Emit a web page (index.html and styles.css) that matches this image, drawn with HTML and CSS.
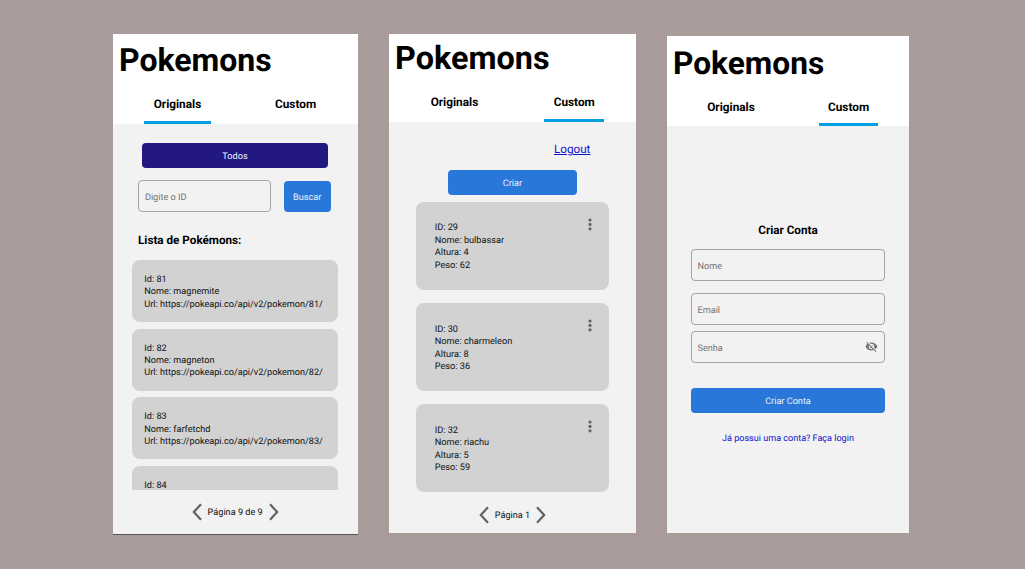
FILE: index.html
```html
<!DOCTYPE html>
<html lang="pt-BR">
<head>
<meta charset="utf-8">
<title>Pokemons</title>
<link rel="stylesheet" href="styles.css">
</head>
<body>
<main class="board">
  <section class="phone phone-list">
    <header class="head">
      <h1 class="title">Pokemons</h1>
      <nav class="tabs"><a class="tab active">Originals</a><a class="tab">Custom</a></nav>
    </header>
    <div class="content">
      <button class="btn btn-all">Todos</button>
      <div class="search">
        <div class="field"><span>Digite o ID</span></div>
        <button class="btn btn-search">Buscar</button>
      </div>
      <h2 class="subtitle">Lista de Pokémons:</h2>
      <div class="list">
        <article class="card"><p>Id: 81</p><p>Nome: magnemite</p><p>Url: https://pokeapi.co/api/v2/pokemon/81/</p></article>
        <article class="card"><p>Id: 82</p><p>Nome: magneton</p><p>Url: https://pokeapi.co/api/v2/pokemon/82/</p></article>
        <article class="card"><p>Id: 83</p><p>Nome: farfetchd</p><p>Url: https://pokeapi.co/api/v2/pokemon/83/</p></article>
        <article class="card"><p>Id: 84</p></article>
      </div>
      <div class="pager">
        <svg class="chev" viewBox="0 0 10 18"><path d="M9 1.3 1.8 9 9 16.7"/></svg>
        <span>Página 9 de 9</span>
        <svg class="chev" viewBox="0 0 10 18"><path d="M1 1.3 8.2 9 1 16.7"/></svg>
      </div>
    </div>
  </section>

  <section class="phone phone-custom">
    <header class="head">
      <h1 class="title">Pokemons</h1>
      <nav class="tabs"><a class="tab">Originals</a><a class="tab active">Custom</a></nav>
    </header>
    <div class="content">
      <a class="logout">Logout</a>
      <button class="btn btn-create">Criar</button>
      <div class="list">
        <article class="card">
          <div><p>ID: 29</p><p>Nome: bulbassar</p><p>Altura: 4</p><p>Peso: 62</p></div>
          <svg class="dots" viewBox="0 0 4 13"><circle cx="2" cy="2" r="1.6"/><circle cx="2" cy="6.4" r="1.6"/><circle cx="2" cy="10.8" r="1.6"/></svg>
        </article>
        <article class="card">
          <div><p>ID: 30</p><p>Nome: charmeleon</p><p>Altura: 8</p><p>Peso: 36</p></div>
          <svg class="dots" viewBox="0 0 4 13"><circle cx="2" cy="2" r="1.6"/><circle cx="2" cy="6.4" r="1.6"/><circle cx="2" cy="10.8" r="1.6"/></svg>
        </article>
        <article class="card">
          <div><p>ID: 32</p><p>Nome: riachu</p><p>Altura: 5</p><p>Peso: 59</p></div>
          <svg class="dots" viewBox="0 0 4 13"><circle cx="2" cy="2" r="1.6"/><circle cx="2" cy="6.4" r="1.6"/><circle cx="2" cy="10.8" r="1.6"/></svg>
        </article>
      </div>
      <div class="pager">
        <svg class="chev" viewBox="0 0 10 18"><path d="M9 1.3 1.8 9 9 16.7"/></svg>
        <span>Página 1</span>
        <svg class="chev" viewBox="0 0 10 18"><path d="M1 1.3 8.2 9 1 16.7"/></svg>
      </div>
    </div>
  </section>

  <section class="phone phone-signup">
    <header class="head">
      <h1 class="title">Pokemons</h1>
      <nav class="tabs"><a class="tab">Originals</a><a class="tab active">Custom</a></nav>
    </header>
    <div class="content">
      <h2 class="subtitle">Criar Conta</h2>
      <div class="field"><span>Nome</span></div>
      <div class="field field-email"><span>Email</span></div>
      <div class="field field-pass"><span>Senha</span>
        <svg class="eye" viewBox="0 0 24 24"><path d="M11.83 9 15 12.16V12a3 3 0 0 0-3-3h-.17m-4.3.8 1.55 1.55c-.05.21-.08.42-.08.65a3 3 0 0 0 3 3c.22 0 .44-.03.65-.08l1.55 1.55c-.67.33-1.41.53-2.2.53a5 5 0 0 1-5-5c0-.79.2-1.53.53-2.2M2 4.27l2.28 2.28.45.45C3.08 8.3 1.78 10 1 12c1.73 4.39 6 7.5 11 7.5 1.55 0 3.03-.3 4.38-.84l.43.42L19.73 22 21 20.73 3.27 3M12 7a5 5 0 0 1 5 5c0 .64-.13 1.26-.36 1.82l2.93 2.93c1.5-1.25 2.7-2.89 3.43-4.75-1.73-4.39-6-7.5-11-7.5-1.4 0-2.74.25-4 .7l2.17 2.15C10.74 7.13 11.35 7 12 7z"/></svg>
      </div>
      <button class="btn btn-signup">Criar Conta</button>
      <a class="login">Já possui uma conta? Faça login</a>
    </div>
  </section>
</main>
</body>
</html>
```
FILE: styles.css
```css
* { box-sizing: border-box; }
body { margin: 0; background: #a99b99; font-family: Roboto, sans-serif; color: #000; text-rendering: geometricPrecision; }
h1, h2, p { margin: 0; }
.board { display: flex; align-items: flex-start; height: 569px; padding-left: 113px; overflow: hidden; }

.phone { display: flex; flex-direction: column; flex: none; background: #f2f2f2; }
.phone-list { width: 244.7px; height: 500.2px; margin-top: 34.4px; border-bottom: 1px solid #555; }
.phone-custom { width: 247px; height: 499px; margin: 34px 0 0 31.3px; }
.phone-signup { width: 242px; height: 496.2px; margin: 36.4px 0 0 31px; }

.head { display: flex; flex-direction: column; background: #fff; flex: none; }
.phone-list .head { height: 89.6px; }
.phone-custom .head { height: 88px; }
.phone-signup .head { height: 90px; }
.title { padding: 7px 0 0 6px; font-size: 32px; line-height: 38px; font-weight: 700; }
.phone-custom .title { padding-top: 5px; font-size: 32.4px; }
.phone-signup .title { padding-top: 9px; font-size: 31.7px; }

.tabs { display: flex; margin-top: auto; }
.tab { height: 31px; padding-top: 3.5px; font-size: 11.8px; line-height: 16px; font-weight: 700; text-align: center; }
.phone-custom .tab { padding-top: 3px; }
.tab.active { border-bottom: 3px solid #03a1e4; }
.phone-list .tabs { padding-left: 31.3px; gap: 55px; }
.phone-custom .tabs { padding-left: 32.3px; gap: 56.7px; }
.phone-signup .tabs { padding-left: 31.5px; gap: 55.6px; }
.tab:first-child { width: 66.3px; }
.tab:last-child { width: 60px; }
.phone-signup .tab:first-child { width: 65px; }
.phone-signup .tab:last-child { width: 59px; }

.content { display: flex; flex-direction: column; flex: 1; min-height: 0; }
.btn { display: block; border: 0; padding: 2px 0 0; border-radius: 4px; background: #2a77da; color: #eaf2fc; font: 9.15px/24px Roboto, sans-serif; text-align: center; text-rendering: inherit; height: 25px; flex: none; }
.field { display: flex; align-items: center; justify-content: space-between; height: 32px; padding: 0 6px 0 5.5px; border: 1px solid #a3a3a3; border-radius: 4px; color: #737373; font-size: 9.15px; flex: none; }
.field span { padding-top: 4px; }
.subtitle { font-size: 11.7px; line-height: 16px; font-weight: 700; }
.card { background: #d2d2d2; border-radius: 8px; flex: none; font-size: 9.13px; line-height: 12.4px; color: #111; }
.pager { display: flex; align-items: center; justify-content: center; gap: 6px; font-size: 9.15px; line-height: 18px; color: #111; }
.pager span { padding-top: 2px; line-height: 16px; }
.chev { width: 10px; height: 18px; fill: none; stroke: #626262; stroke-width: 2.2; }

.btn-all { width: 186px; margin: 18.6px 0 0 29px; background: #231783; }
.search { display: flex; margin: 12.6px 0 0 25.4px; }
.search .field { width: 132.5px; }
.btn-search { width: 47.3px; height: 31px; line-height: 30px; margin: .6px 0 0 12.7px; }
.phone-list .subtitle { margin: 19.4px 0 0 25px; }
.phone-list .list { display: flex; flex-direction: column; gap: 6.8px; height: 229.8px; margin: 12.2px 0 0 18.9px; width: 206.5px; overflow: hidden; }
.phone-list .card { height: 62px; padding: 14px 12px 0 12.4px; white-space: nowrap; }
.phone-list .pager { margin: 13.5px 0 0 -.4px; }

.logout { margin: 19px 0 0 165px; font-size: 11.7px; line-height: 16px; color: #1313cc; text-decoration: underline; }
.btn-create { width: 129px; margin: 12.8px 0 0 59px; }
.phone-custom .list { display: flex; flex-direction: column; gap: 13px; margin: 6.8px 0 0 26.7px; width: 193.3px; }
.phone-custom .card { display: flex; justify-content: space-between; height: 88.3px; padding: 20.8px 17.3px 0 19px; line-height: 12.5px; font-size: 9.2px; }
.dots { width: 4px; height: 13px; margin-top: -4.7px; fill: #626262; }
.phone-custom .pager { margin: 14px 0 0; }

.phone-signup .content { padding: 95.5px 24px 0; }
.phone-signup .subtitle { text-align: center; margin-bottom: 10.9px; }
.field-email { margin-top: 12px; }
.field-pass { margin-top: 5.8px; }
.eye { width: 13px; height: 13px; fill: #707070; }
.btn-signup { margin-top: 25.4px; }
.login { margin-top: 19.3px; text-align: center; font-size: 9.05px; line-height: 14px; color: #1313cc; }
```
